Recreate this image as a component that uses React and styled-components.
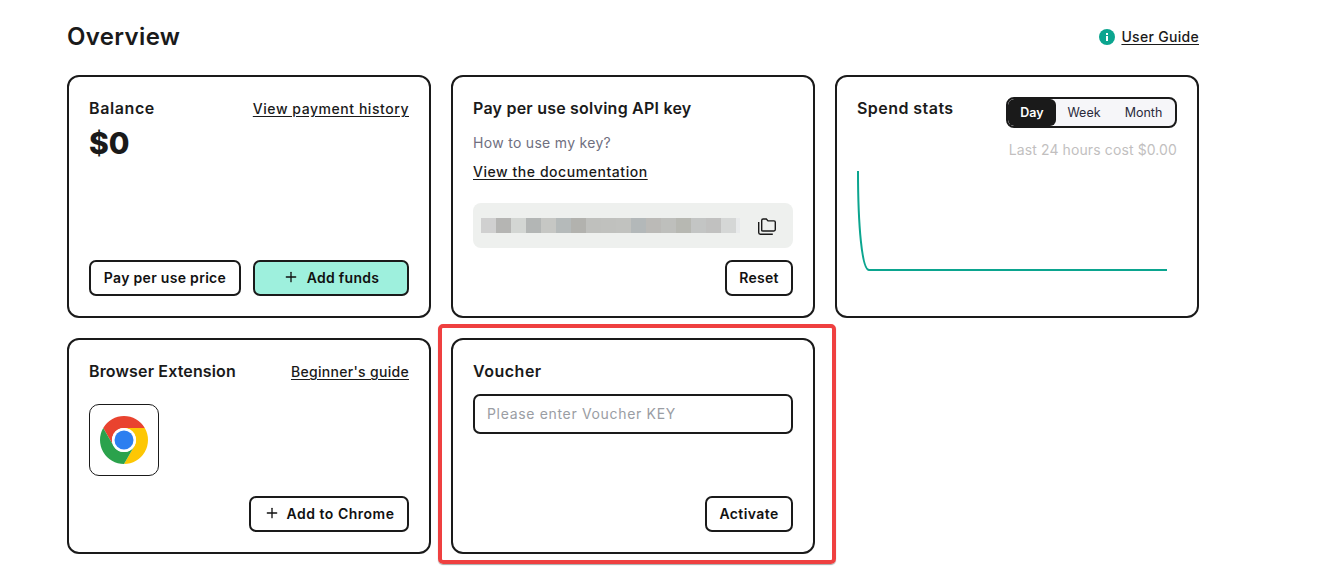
import styled, { createGlobalStyle } from "styled-components";
import { Plus } from "lucide-react";

const GlobalStyle = createGlobalStyle`
  html, body {
    margin: 0;
    padding: 0;
    background: #fff;
    color: #1a1a1a;
    font-family: Inter, "Liberation Sans", sans-serif;
  }
  * { box-sizing: border-box; }
`;

const Page = styled.div`
  width: 1132px;
  min-height: 572px;
  margin-left: 67px;
  padding-top: 20px;
`;

const Header = styled.header`
  display: flex;
  justify-content: space-between;
  align-items: center;
  height: 33px;
  margin-bottom: 22px;
`;

const PageTitle = styled.h1`
  margin: 0;
  font-size: 24px;
  line-height: 33px;
  font-weight: 600;
  letter-spacing: 0.35px;
`;

const Guide = styled.div`
  display: flex;
  align-items: center;
  gap: 6px;
`;

const TextLink = styled.a`
  font-size: 14px;
  line-height: 24px;
  font-weight: 500;
  color: #1a1a1a;
  text-decoration: underline;
  text-underline-offset: 2px;
  letter-spacing: ${(p) => p.$spacing || "0.55px"};
  white-space: nowrap;
`;

const HeadLink = styled(TextLink)`
  margin-top: 1px;
`;

const Grid = styled.div`
  display: grid;
  grid-template-columns: repeat(3, 364px);
  grid-template-rows: 243px 216px;
  gap: 20px;
`;

const Card = styled.section`
  position: relative;
  display: flex;
  flex-direction: column;
  padding: 19px 20px 20px;
  border: 2px solid #1a1a1a;
  border-radius: 12px;
  background: #fff;
`;

const Highlighted = styled(Card)`
  &::after {
    content: "";
    position: absolute;
    top: -16px;
    left: -15px;
    right: -23px;
    bottom: -12px;
    border: 4px solid #ef4040;
    border-radius: 5px;
    box-shadow: 0 1px 1px rgba(0, 0, 0, 0.35);
    pointer-events: none;
  }
`;

const CardHead = styled.div`
  display: flex;
  justify-content: space-between;
  align-items: flex-start;
`;

const CardTitle = styled.h2`
  margin: 0;
  font-size: 16px;
  line-height: 24px;
  font-weight: 600;
  letter-spacing: ${(p) => p.$spacing || "0.22px"};
`;

const Amount = styled.div`
  margin-top: 2px;
  font-size: 30px;
  line-height: 40px;
  font-weight: 800;
`;

const Actions = styled.div`
  display: flex;
  justify-content: flex-end;
  gap: 12px;
  margin-top: auto;
`;

const Button = styled.button`
  display: flex;
  align-items: center;
  justify-content: center;
  gap: ${(p) => p.$gap || 8}px;
  width: ${(p) => p.$width}px;
  height: 36px;
  padding: 0 0 2px;
  border: 2px solid #1a1a1a;
  border-radius: 7px;
  background: ${(p) => (p.$accent ? "#9ef0dd" : "#fff")};
  color: #111;
  font-family: inherit;
  font-size: 14px;
  font-weight: 600;
  letter-spacing: ${(p) => p.$spacing || "0.3px"};
  white-space: nowrap;
`;

const Muted = styled.p`
  margin: 11px 0 0;
  font-size: 14px;
  line-height: 24px;
  color: #6f6f80;
  letter-spacing: 0.3px;
`;

const DocLink = styled(TextLink)`
  display: block;
  margin-top: 5px;
  width: fit-content;
`;

const KeyBox = styled.div`
  display: flex;
  align-items: center;
  justify-content: space-between;
  height: 45px;
  margin-top: 19px;
  padding: 0 16px 0 8px;
  border-radius: 8px;
  background: #eef0ee;
`;

const Masked = styled.div`
  display: flex;
`;

const MaskBlock = styled.span`
  width: ${(p) => p.$w || 15}px;
  height: 15px;
  background: ${(p) => p.$c};
`;

const Toggle = styled.div`
  display: flex;
  width: 171px;
  height: 31px;
  margin-top: 1px;
  border: 2px solid #1a1a1a;
  border-radius: 8px;
  background: #f6f6f9;
  overflow: hidden;
`;

const ToggleItem = styled.div`
  display: flex;
  align-items: center;
  justify-content: center;
  width: ${(p) => p.$width}px;
  border-radius: 6px;
  background: ${(p) => (p.$active ? "#1a1a1a" : "transparent")};
  color: ${(p) => (p.$active ? "#fff" : "#2a2a3c")};
  font-size: 12.5px;
  font-weight: ${(p) => (p.$active ? 600 : 400)};
`;

const CostNote = styled.div`
  margin-top: 10px;
  text-align: right;
  font-size: 14px;
  line-height: 24px;
  color: #c2bfbf;
  letter-spacing: 0.11px;
`;

const Chart = styled.svg`
  display: block;
  margin-top: 4px;
`;

const IconTile = styled.div`
  display: flex;
  align-items: center;
  justify-content: center;
  width: 70px;
  height: 72px;
  margin-top: 20px;
  border: 1px solid #1a1a1a;
  border-radius: 10px;
`;

const VoucherInput = styled.input`
  width: 100%;
  height: 40px;
  margin-top: 11px;
  padding: 0 12px 2px;
  border: 2px solid #1a1a1a;
  border-radius: 7px;
  font-family: inherit;
  font-size: 14px;
  letter-spacing: 0.67px;
  &::placeholder {
    color: #9a9da3;
    opacity: 1;
  }
`;

const InfoIcon = () => (
  <svg width="16" height="16" viewBox="0 0 16 16">
    <circle cx="8" cy="8" r="8" fill="#0ba58f" />
    <rect x="7" y="7" width="2" height="5" fill="#fff" />
    <rect x="7" y="4" width="2" height="2" fill="#fff" />
  </svg>
);

const CopyIcon = () => (
  <svg width="20" height="20" viewBox="0 0 20 20" fill="none" stroke="#1a1a1a" strokeWidth="1.4">
    <path d="M4.7 14.5V4.4q0-1.4 1.4-1.4h3.2l1.7 1.9h6q1.3 0 1.3 1.3v7.4q0 1.4-1.4 1.4H6.1q-1.4 0-1.4-.5Z" />
    <path d="M1.7 6v10.6q0 1.6 1.6 1.6h12.5" />
  </svg>
);

const ChromeIcon = () => {
  const slice = "M44.78 12A24 24 0 0 0 3.22 12L13.6 30A12 12 0 0 1 24 12Z";
  return (
    <svg width="48" height="48" viewBox="0 0 48 48">
      <circle cx="24" cy="24" r="23.5" fill="#fff" />
      <path d={slice} fill="#e9432f" />
      <path d={slice} fill="#fdc704" transform="rotate(120 24 24)" />
      <path d={slice} fill="#2ba24c" transform="rotate(240 24 24)" />
      <circle cx="24" cy="24" r="12" fill="#fff" />
      <circle cx="24" cy="24" r="9.5" fill="#2d7ff0" />
    </svg>
  );
};

const maskColors = [
  "#d0d0d0", "#b5b5b3", "#d3d6d3", "#b3b6b5", "#c6c7c4", "#b5baba",
  "#b2b2ae", "#bfc0bd", "#c0c1be", "#c1c2bf", "#b3b8b9", "#bbbab7",
  "#bebfbc", "#b7b8b2", "#c3c5c4", "#c1c1c0", "#d5d7d6",
];

const App = () => (
  <>
    <GlobalStyle />
    <Page>
      <Header>
        <PageTitle>Overview</PageTitle>
        <Guide>
          <InfoIcon />
          <TextLink $spacing="0.3px">User Guide</TextLink>
        </Guide>
      </Header>
      <Grid>
        <Card>
          <CardHead>
            <CardTitle $spacing="0.6px">Balance</CardTitle>
            <HeadLink>View payment history</HeadLink>
          </CardHead>
          <Amount>$0</Amount>
          <Actions>
            <Button $width={152}>Pay per use price</Button>
            <Button $width={156} $accent>
              <Plus size={16} strokeWidth={2} />
              Add funds
            </Button>
          </Actions>
        </Card>

        <Card>
          <CardTitle>Pay per use solving API key</CardTitle>
          <Muted>How to use my key?</Muted>
          <DocLink>View the documentation</DocLink>
          <KeyBox>
            <Masked>
              {maskColors.map((c, i) => (
                <MaskBlock key={i} $c={c} />
              ))}
              <MaskBlock $c="#e8eaeb" $w={4} />
            </Masked>
            <CopyIcon />
          </KeyBox>
          <Actions>
            <Button $width={68}>Reset</Button>
          </Actions>
        </Card>

        <Card>
          <CardHead>
            <CardTitle $spacing="0.45px">Spend stats</CardTitle>
            <Toggle>
              <ToggleItem $width={48} $active>Day</ToggleItem>
              <ToggleItem $width={56}>Week</ToggleItem>
              <ToggleItem $width={63}>Month</ToggleItem>
            </Toggle>
          </CardHead>
          <CostNote>Last 24 hours cost $0.00</CostNote>
          <Chart width="320" height="112" viewBox="0 0 320 112">
            <path
              d="M1 5C1 60 5 104 12 104H310"
              fill="none"
              stroke="#0ba58f"
              strokeWidth="2"
            />
          </Chart>
        </Card>

        <Card>
          <CardHead>
            <CardTitle $spacing="0.15px">Browser Extension</CardTitle>
            <HeadLink $spacing="0.3px">Beginner's guide</HeadLink>
          </CardHead>
          <IconTile>
            <ChromeIcon />
          </IconTile>
          <Actions>
            <Button $width={160} $spacing="0.5px" $gap={7}>
              <Plus size={16} strokeWidth={2} />
              Add to Chrome
            </Button>
          </Actions>
        </Card>

        <Highlighted>
          <CardTitle $spacing="0.5px">Voucher</CardTitle>
          <VoucherInput placeholder="Please enter Voucher KEY" />
          <Actions>
            <Button $width={88} $spacing="0.4px">Activate</Button>
          </Actions>
        </Highlighted>
      </Grid>
    </Page>
  </>
);

export default App;
